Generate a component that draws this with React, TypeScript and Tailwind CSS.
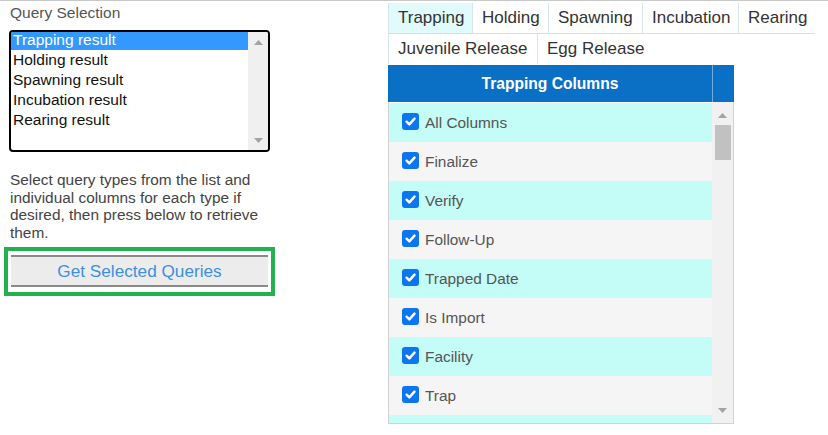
import React from 'react';

const queryTypes = ['Trapping result', 'Holding result', 'Spawning result', 'Incubation result', 'Rearing result'];

const tabRows = [
  [
    { label: 'Trapping', w: 'w-[84px]', active: true },
    { label: 'Holding', w: 'w-[76px]' },
    { label: 'Spawning', w: 'w-[94px]' },
    { label: 'Incubation', w: 'w-[96px]' },
    { label: 'Rearing', w: 'w-[77px]' },
  ],
  [
    { label: 'Juvenile Release', w: 'w-[149px]' },
    { label: 'Egg Release', w: 'w-[118px]' },
  ],
];

const columns = ['All Columns', 'Finalize', 'Verify', 'Follow-Up', 'Trapped Date', 'Is Import', 'Facility', 'Trap'];

function Checkbox() {
  return (
    <span className="mt-[10px] flex h-[17px] w-[17px] shrink-0 items-center justify-center rounded-[3px] bg-[#0b75f2]">
      <svg width="13" height="13" viewBox="0 0 12 12">
        <path d="M2.4 6.2 L4.9 8.7 L9.7 3.3" fill="none" stroke="white" strokeWidth="2.3" strokeLinecap="round" strokeLinejoin="round" />
      </svg>
    </span>
  );
}

function Arrow({ up }: { up?: boolean }) {
  return (
    <svg width="9" height="5" viewBox="0 0 9 5">
      <path d={up ? 'M0 5 L4.5 0 L9 5 Z' : 'M0 0 L4.5 5 L9 0 Z'} fill="#a3a3a3" />
    </svg>
  );
}

export default function App() {
  return (
    <div className="flex h-[435px] w-[828px] border-t border-[#c8c8c8] bg-white font-['Liberation_Sans',Arial,sans-serif]">
      {/* left side */}
      <div className="w-[388px] shrink-0">
        <div className="ml-[10px] mt-[3px] text-[15.5px] leading-[18px] text-[#555]">Query Selection</div>

        <div className="ml-[9px] mt-[8px] flex h-[122px] w-[261px] overflow-hidden rounded-[4px] border-2 border-black">
          <div className="-mt-[2px] flex-1">
            {queryTypes.map((q, i) => (
              <div
                key={q}
                className={`pl-[2px] text-[15.5px] leading-[20px] ${i === 0 ? 'bg-[#3399ff] text-white' : 'text-[#111]'}`}
              >
                {q}
              </div>
            ))}
          </div>
          <div className="flex w-[20px] flex-col items-center justify-between bg-[#f0f0f0] pb-[7px] pt-[8px]">
            <Arrow up />
            <Arrow />
          </div>
        </div>

        <p className="ml-[10px] mt-[19px] w-[266px] text-[15.4px] leading-[17.5px] text-[#444]">
          Select query types from the list and individual columns for each type if desired, then press below to retrieve them.
        </p>

        <div className="ml-[4px] mt-[6px] h-[49px] w-[271px] border-4 border-[#22b14c] px-[3px] pt-[4px]">
          <button className="h-[32px] w-full border-y-2 border-[#8a8a8a] bg-[#ececec] text-[17.2px] leading-[28px] text-[#3d8fe0]">
            Get Selected Queries
          </button>
        </div>
      </div>

      {/* right side */}
      <div className="flex-1">
        <div className="mt-[2px]">
          {tabRows.map((row, ri) => (
            <div key={ri} className={`flex ${ri === 0 ? 'w-[427px] border-b border-[#cfe2e8]' : ''}`}>
              {row.map((t) => (
                <div
                  key={t.label}
                  className={`${t.w} h-[30px] border-l border-[#d6e6ea] pl-[9px] text-[17px] leading-[30px] text-[#333] ${t.active ? 'bg-[#e1fafb]' : ''}`}
                >
                  {t.label}
                </div>
              ))}
            </div>
          ))}
        </div>

        <div className="mt-[1px] w-[346px]">
          <div className="flex h-[37px] bg-[#0a70c6]">
            <div className="flex flex-1 items-center justify-center text-[15.6px] font-bold text-white">Trapping Columns</div>
            <div className="w-[22px] border-l border-[#74acd9]"></div>
          </div>
          <div className="flex h-[322px] overflow-hidden border-x border-b border-[#d2d2d2]">
            <div className="flex-1 pt-[1px]">
              {columns.map((c, i) => (
                <div
                  key={c}
                  className={`flex h-[39px] items-start gap-[6px] pl-[13px] ${i % 2 === 0 ? 'bg-[#c4fcf8]' : 'bg-[#f5f5f5]'}`}
                >
                  <Checkbox />
                  <span className="mt-[10px] text-[15.4px] leading-[20px] text-[#555]">{c}</span>
                </div>
              ))}
              <div className="h-[8px] bg-[#c4fcf8]"></div>
            </div>
            <div className="flex w-[21px] flex-col items-center bg-[#f1f1f1]">
              <div className="mt-[11px]">
                <Arrow up />
              </div>
              <div className="mt-[7px] h-[35px] w-[16px] bg-[#c1c1c1]"></div>
              <div className="mb-[10px] mt-auto">
                <Arrow />
              </div>
            </div>
          </div>
        </div>
      </div>
    </div>
  );
}
